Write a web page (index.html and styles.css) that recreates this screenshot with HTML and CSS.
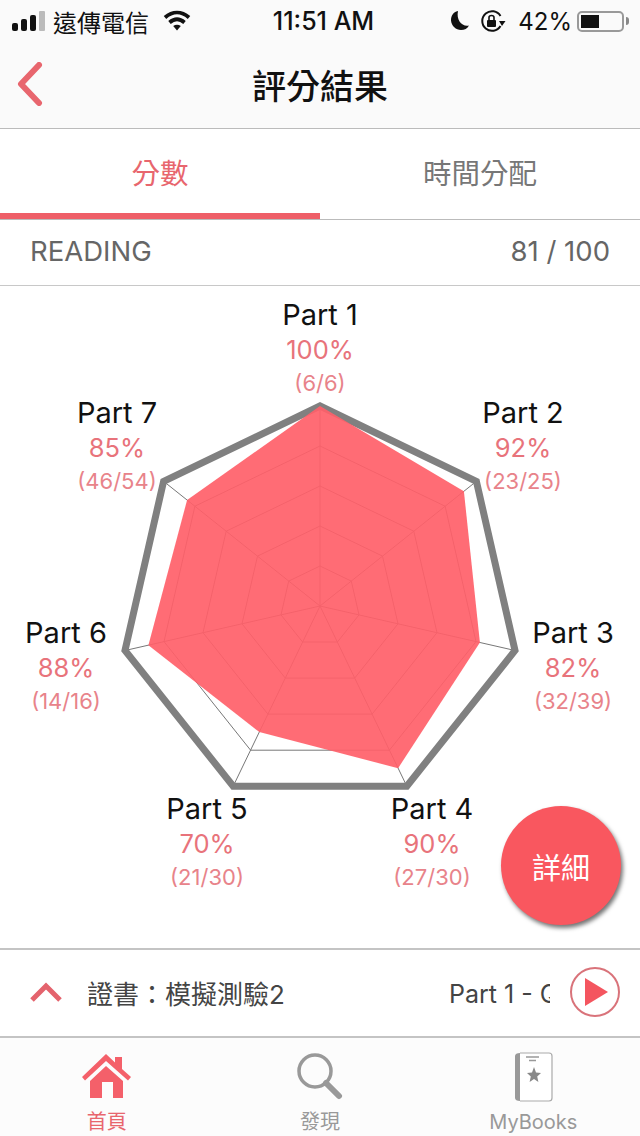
FILE: index.html
```html
<!DOCTYPE html>
<html lang="zh-Hant">
<head>
    <meta charset="UTF-8">
    <title>評分結果</title>
    <link rel="stylesheet" href="styles.css">
</head>
<body>
<div class="app">
    <div class="top-area">
        <div class="status-bar">
            <div class="status-left">
                <svg class="signal" width="36" height="20" viewBox="0 0 36 20">
                    <rect x="0" y="12" width="6" height="8" rx="2" fill="#111"/>
                    <rect x="9" y="8" width="6" height="12" rx="2" fill="#111"/>
                    <rect x="18" y="4" width="6" height="16" rx="2" fill="#111"/>
                    <rect x="27" y="0" width="6" height="20" rx="1" fill="#bbb"/>
                </svg>
                <span class="carrier">遠傳電信</span>
                <svg class="wifi" width="28" height="22" viewBox="0 0 28 22">
                    <path d="M2 7.5C9.500 1 18.500 1 26 7.500" fill="none" stroke="#111" stroke-width="3.800"/>
                    <path d="M6.500 12.500C11.500 8.200 16.500 8.200 21.500 12.500" fill="none" stroke="#111" stroke-width="3.800"/>
                    <path d="M10.200 16L14 20.500L17.800 16C15.500 14.200 12.500 14.200 10.200 16Z" fill="#111"/>
                </svg>
            </div>
            <div class="status-time">11:51 AM</div>
            <div class="status-right">
                <svg width="20" height="22" viewBox="0 0 20 22">
                    <path d="M8 1C3 2 1 6 1 10.500C1.500 16 6 20 11 20C14.500 20 17.500 18.500 19 15.500C12 17 6 10 8 1Z" fill="#111"/>
                </svg>
                <svg class="lock-rotate" width="26" height="24" viewBox="0 0 26 24">
                    <path d="M20.500 17A9.800 9.800 0 1 1 20.500 7" fill="none" stroke="#111" stroke-width="2"/>
                    <path d="M19 12L25.500 12L22 17Z" fill="#111"/>
                    <rect x="7" y="11" width="9" height="7" rx="1" fill="#111"/>
                    <path d="M9 11V8.500C9 5.800 14 5.800 14 8.500V11" fill="none" stroke="#111" stroke-width="1.600"/>
                </svg>
                <span class="battery-pct">42%</span>
                <div class="battery">
                    <div class="battery-fill"></div>
                </div>
                <div class="battery-nub"></div>
            </div>
        </div>
        <div class="nav-bar">
            <svg class="back" width="28" height="44" viewBox="0 0 28 44">
                <path d="M23 3L5 22L23 41" fill="none" stroke="#e8666e" stroke-width="6" stroke-linecap="round" stroke-linejoin="round"/>
            </svg>
            <h1 class="nav-title">評分結果</h1>
        </div>
    </div>

    <div class="tabs">
        <div class="tab tab-active">分數</div>
        <div class="tab">時間分配</div>
    </div>

    <div class="score-row">
        <span>READING</span>
        <span>81 / 100</span>
    </div>

    <div class="chart">
        <svg class="radar" width="640" height="662" viewBox="0 286 640 662">
            <g class="radar-grid">
                <polygon points="320,446 445.1,506.2 476,641.6 389.4,750.2 250.6,750.2 164,641.6 194.9,506.2"/>
                <polygon points="320,486 413.8,531.2 437,632.7 372.1,714.1 267.9,714.1 203,632.7 226.2,531.2"/>
                <polygon points="320,526 382.5,556.1 398,623.8 354.7,678.1 285.3,678.1 242,623.8 257.5,556.1"/>
                <polygon points="320,566 351.3,581.1 359,614.9 337.4,642 302.6,642 281,614.9 288.7,581.1"/>
                <path d="M320 606L320 406M320 606L476.4 481.3M320 606L515 650.5M320 606L406.8 786.2M320 606L233.2 786.2M320 606L125 650.5M320 606L163.6 481.3"/>
            </g>
            <polygon class="radar-outer" points="320,406 476.4,481.3 515,650.5 406.8,786.2 233.2,786.2 125,650.5 163.6,481.3"/>
            <polygon class="radar-data" points="320,406 463.9,491.3 479.9,642.5 398.1,768.2 259.3,732.1 148.4,645.2 187.1,500"/>
        </svg>

        <div class="label label-1"><b>Part 1</b><span class="pct">100%</span><span class="frac">(6/6)</span></div>
        <div class="label label-2"><b>Part 2</b><span class="pct">92%</span><span class="frac">(23/25)</span></div>
        <div class="label label-3"><b>Part 3</b><span class="pct">82%</span><span class="frac">(32/39)</span></div>
        <div class="label label-4"><b>Part 4</b><span class="pct">90%</span><span class="frac">(27/30)</span></div>
        <div class="label label-5"><b>Part 5</b><span class="pct">70%</span><span class="frac">(21/30)</span></div>
        <div class="label label-6"><b>Part 6</b><span class="pct">88%</span><span class="frac">(14/16)</span></div>
        <div class="label label-7"><b>Part 7</b><span class="pct">85%</span><span class="frac">(46/54)</span></div>

        <div class="fab">詳細</div>
    </div>

    <div class="player">
        <svg class="player-up" width="34" height="22" viewBox="0 0 34 22">
            <path d="M3 19L17 5L31 19" fill="none" stroke="#e4636d" stroke-width="5"/>
        </svg>
        <div class="player-book"><span>證書：模擬測驗2</span></div>
        <div class="player-part">Part 1 - Question</div>
        <svg class="player-play" width="52" height="52" viewBox="0 0 52 52">
            <circle cx="26" cy="26" r="24" fill="#fff" stroke="#d9737a" stroke-width="2"/>
            <path d="M16 12L39 26L16 40Z" fill="#f4555f"/>
        </svg>
    </div>

    <div class="bottom-tabs">
        <div class="bottom-tab bottom-tab-active">
            <svg width="52" height="48" viewBox="0 0 52 48">
                <path d="M1 25L25 2L34 10.500V5H41V17L50 25L47 28.500L25 9L4 28.500Z" fill="#f4606a"/>
                <path d="M9 29L25 14L42 29V46H32V30H21V46H9Z" fill="#f4606a"/>
            </svg>
            <span>首頁</span>
        </div>
        <div class="bottom-tab">
            <svg width="48" height="48" viewBox="0 0 48 48">
                <circle cx="19" cy="19" r="16" fill="none" stroke="#999" stroke-width="3.500"/>
                <path d="M30 31L43 44" fill="none" stroke="#999" stroke-width="6" stroke-linecap="round"/>
            </svg>
            <span>發現</span>
        </div>
        <div class="bottom-tab">
            <svg width="40" height="50" viewBox="0 0 40 50">
                <path d="M2 4C2 2 4 1 7 1V49C4 49 2 48 2 46Z" fill="#999"/>
                <path d="M7 1H36C38 1 39 2 39 4V46C39 48 38 49 36 49H7" fill="#fff" stroke="#aaa" stroke-width="1.200"/>
                <path d="M13 5H26M16 8.500H23" stroke="#999" stroke-width="1.500"/>
                <path d="M21 15L23 20.500L28 21L24.200 24.500L25.400 30L21 27L16.600 30L17.800 24.500L14 21L19 20.500Z" fill="#888"/>
            </svg>
            <span>MyBooks</span>
        </div>
    </div>
</div>
</body>
</html>
```

FILE: styles.css
```css
* {
    margin: 0;
    padding: 0;
    box-sizing: border-box;
}

body {
    background: #ffffff;
    font-family: Inter, "Noto Sans CJK TC", sans-serif;
    color: #111111;
}

.app {
    width: 640px;
    height: 1136px;
    display: flex;
    flex-direction: column;
    overflow: hidden;
}

.top-area {
    height: 129px;
    background: #fafafa;
    border-bottom: 1px solid #bbbbbb;
}

.status-bar {
    height: 42px;
    padding: 0 11px 0 12px;
    display: grid;
    grid-template-columns: 1fr auto 1fr;
    align-items: center;
    font-size: 24px;
}

.status-left {
    display: flex;
    align-items: center;
}

.signal {
    margin-right: 5px;
}

.wifi {
    margin-left: 14px;
}

.status-time {
    font-size: 25px;
    font-weight: 500;
    padding-left: 6px;
}

.status-right {
    display: flex;
    align-items: center;
    justify-content: flex-end;
}

.lock-rotate {
    margin-left: 10px;
}

.battery-pct {
    margin-left: 12px;
}

.battery {
    width: 47px;
    height: 21px;
    margin-left: 5px;
    padding: 2px;
    border: 2px solid #999999;
    border-radius: 5px;
}

.battery-fill {
    width: 18px;
    height: 100%;
    background: #111111;
}

.battery-nub {
    width: 3px;
    height: 8px;
    margin-left: 2px;
    background: #888888;
    border-radius: 0 3px 3px 0;
}

.nav-bar {
    height: 86px;
    padding-left: 16px;
    padding-bottom: 2px;
    display: flex;
    align-items: center;
    position: relative;
}

.nav-title {
    position: absolute;
    left: 0;
    right: 0;
    text-align: center;
    font-size: 34px;
    font-weight: 500;
}

.tabs {
    height: 91px;
    display: flex;
    border-bottom: 1px solid #bbbbbb;
}

.tab {
    flex: 1;
    padding-top: 22px;
    text-align: center;
    font-size: 28.500px;
    color: #777777;
}

.tab-active {
    color: #e8666e;
    border-bottom: 6px solid #ee5f68;
}

.score-row {
    height: 66px;
    padding: 0 30px 3px;
    display: flex;
    align-items: center;
    justify-content: space-between;
    font-size: 27.500px;
    color: #666666;
    border-bottom: 1px solid #c8c8c8;
}

.chart {
    height: 662px;
    position: relative;
}

.radar {
    display: block;
}

.radar-grid {
    fill: none;
    stroke: #777777;
    stroke-width: 1;
}

.radar-outer {
    fill: none;
    stroke: #808080;
    stroke-width: 7;
}

.radar-data {
    fill: #ff5f69;
    fill-opacity: 0.92;
}

.label {
    position: absolute;
    width: 130px;
    display: flex;
    flex-direction: column;
    align-items: center;
}

.label b {
    height: 36px;
    line-height: 36px;
    font-size: 29px;
    font-weight: 400;
    color: #111111;
}

.pct {
    height: 34px;
    line-height: 34px;
    font-size: 25.500px;
    color: #e8737b;
}

.frac {
    height: 32px;
    line-height: 32px;
    font-size: 22px;
    color: #e8838a;
}

.label-1 { left: 255px; top: 11px; }
.label-2 { left: 458px; top: 109px; }
.label-3 { left: 508px; top: 329px; }
.label-4 { left: 367px; top: 505px; }
.label-5 { left: 142px; top: 505px; }
.label-6 { left: 1px; top: 329px; }
.label-7 { left: 52px; top: 109px; }

.fab {
    position: absolute;
    left: 501px;
    top: 520px;
    width: 120px;
    height: 119px;
    border-radius: 50%;
    background: #f9575f;
    color: #ffffff;
    font-size: 29px;
    display: flex;
    align-items: center;
    justify-content: center;
    box-shadow: 2px 3px 4px rgba(0, 0, 0, 0.55);
}

.player {
    height: 90px;
    padding: 0 19px 2px 29px;
    display: flex;
    align-items: center;
    border-top: 2px solid #c4c4c4;
    border-bottom: 2px solid #c4c4c4;
    font-size: 25px;
    color: #444444;
}

.player-book {
    width: 210px;
    margin-left: 25px;
    font-size: 26px;
    overflow: hidden;
    white-space: nowrap;
}

.player-book span {
    margin-left: -1px;
}

.player-part {
    width: 101px;
    margin-top: 4px;
    margin-left: 151px;
    overflow: hidden;
    white-space: nowrap;
}

.player-play {
    margin-left: 19px;
}

.bottom-tabs {
    flex: 1;
    display: flex;
    background: #fcfcfc;
}

.bottom-tab {
    flex: 1;
    padding-top: 14px;
    display: flex;
    flex-direction: column;
    align-items: center;
    font-size: 20px;
    color: #999999;
}

.bottom-tab span {
    margin-top: auto;
    line-height: 28px;
}

.bottom-tab-active {
    color: #e8666e;
}
```
